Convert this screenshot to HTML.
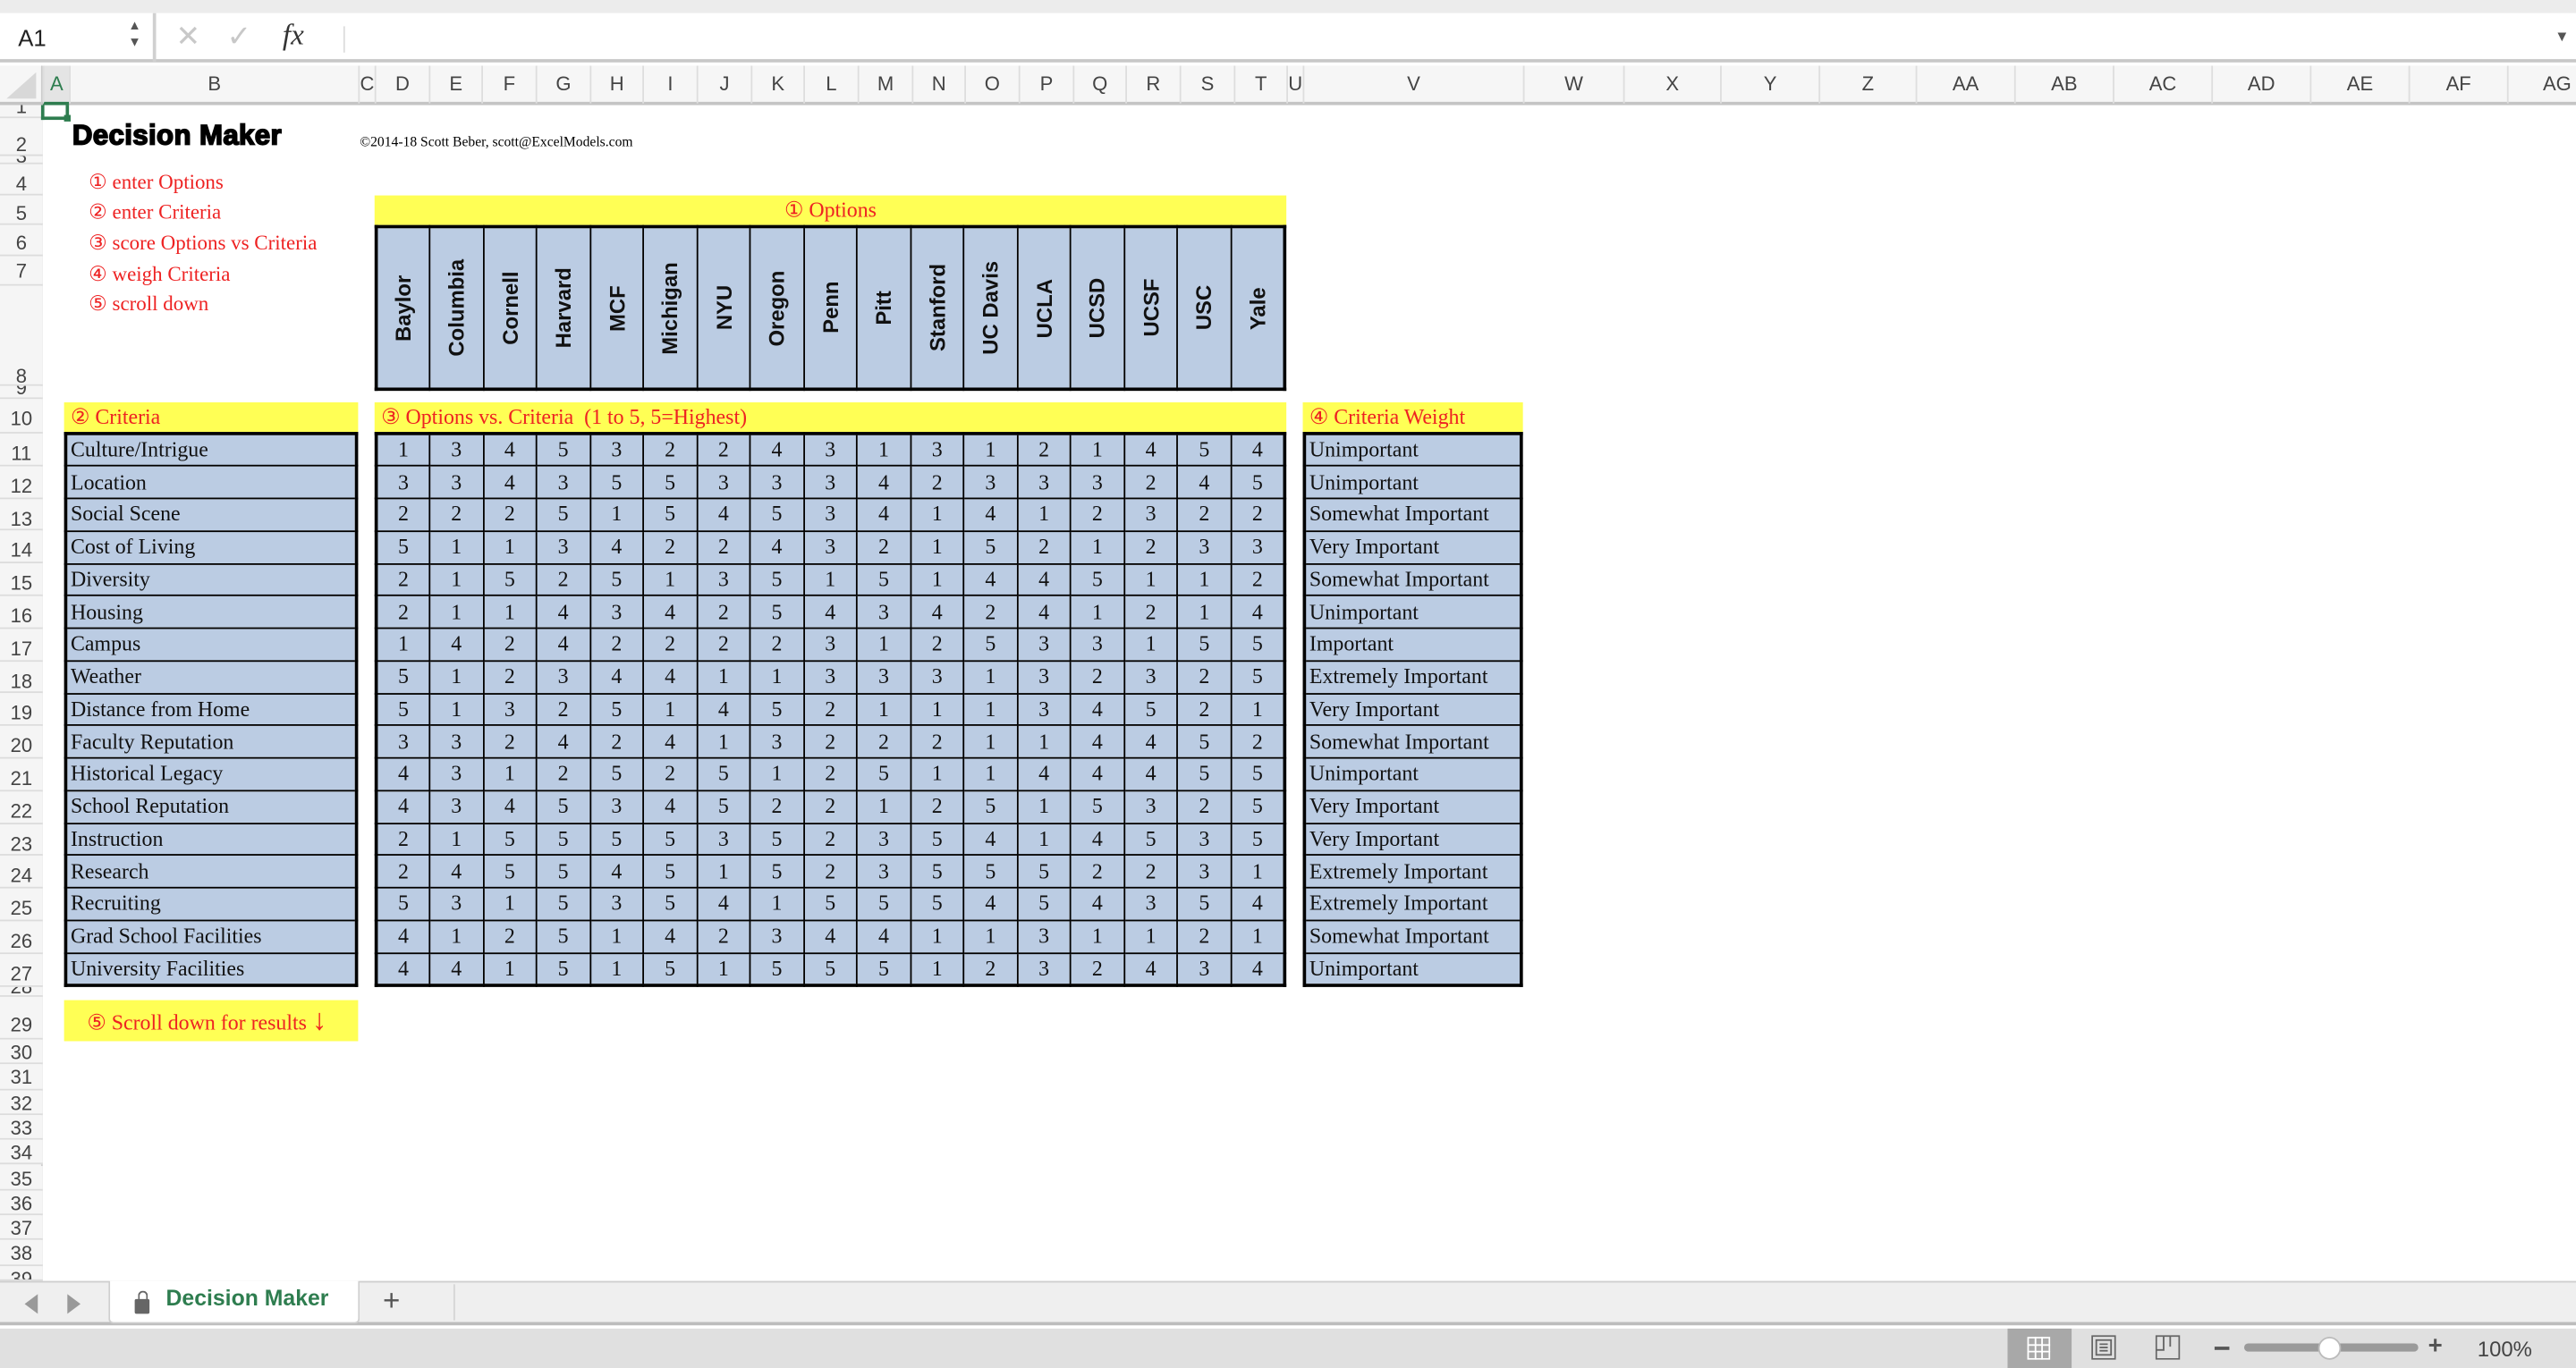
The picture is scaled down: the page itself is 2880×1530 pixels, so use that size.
<!DOCTYPE html>
<html><head><meta charset="utf-8"><style>
*{margin:0;padding:0;box-sizing:border-box}
html,body{width:2880px;height:1530px;overflow:hidden;background:#fff}
#w{position:absolute;left:0;top:0;width:1568px;height:833px;transform:scale(1.83673,1.83673);transform-origin:0 0;font-family:"Liberation Sans",sans-serif;background:#fff;overflow:hidden}
.a{position:absolute}
.ser{font-family:"Liberation Serif","DejaVu Serif",serif}
.red{color:#ee2222}
.yel{background:#ffff55}
table{border-collapse:collapse;table-layout:fixed}
td{border:1px solid #000;background:#bbcce3;height:19.75px;padding:0;font-family:"Liberation Serif",serif;font-size:13px;color:#111;white-space:nowrap;overflow:hidden}
.sc td{text-align:center}
.lt td{padding-left:2px}
.ch{position:absolute;top:40px;height:23px;border-left:1px solid #dedede;font-size:12px;color:#444;text-align:center;line-height:23px}
.rh{position:absolute;left:0;width:26px;border-bottom:1px solid #dcdcdc;font-size:12px;color:#444;text-align:center;overflow:hidden;background:#f5f5f5}
.vt{writing-mode:vertical-rl;transform:rotate(180deg);font-family:"Liberation Sans",sans-serif;font-weight:bold;font-size:13px;display:flex;align-items:center;justify-content:center;height:97px;width:100%;margin:0 auto}
.op td{height:97px;text-align:center;vertical-align:middle}
</style></head><body><div id="w">
<!-- top bars -->
<div class="a" style="left:0;top:0;width:1568px;height:8px;background:#ececec"></div>
<div class="a" style="left:0;top:8px;width:1568px;height:30px;background:#fff;border-bottom:2px solid #c8c8c8"></div>
<div class="a" style="left:0;top:8px;width:95px;height:30px;border-right:2px solid #d0d0d0"></div>
<div class="a" style="left:11px;top:15px;font-size:14px;color:#222">A1</div>
<div class="a" style="left:78px;top:11px;font-size:8px;color:#555;line-height:10px">▲<br>▼</div>
<div class="a" style="left:107px;top:12px;font-size:18px;color:#c8c8c8">✕</div>
<div class="a" style="left:138px;top:12px;font-size:18px;color:#c8c8c8">✓</div>
<div class="a ser" style="left:172px;top:11px;font-size:18px;font-style:italic;color:#333">fx</div>
<div class="a" style="left:209px;top:16px;width:1px;height:16px;background:#ddd"></div>
<div class="a" style="left:1555px;top:17px;font-size:9px;color:#555">▼</div>
<!-- column header -->
<div class="a" style="left:0;top:40px;width:1568px;height:24px;background:#f6f6f6;border-bottom:2px solid #c4c4c4"></div>
<div class="a" style="left:0;top:40px;width:26px;height:23px;border-right:1px solid #ccc"></div>
<div class="a" style="left:4px;top:44px;width:0;height:0;border-left:18px solid transparent;border-bottom:16px solid #d8d8d8"></div>
<div class="ch" style="left:26px;width:16px;color:#2e7d4f;background:#e4e4e4;border-bottom:2px solid #2e7d4f;height:24px">A</div>
<div class="ch" style="left:42px;width:176px">B</div>
<div class="ch" style="left:218px;width:10px">C</div>
<div class="ch" style="left:228px;width:33px">D</div>
<div class="ch" style="left:261px;width:32px">E</div>
<div class="ch" style="left:293px;width:33px">F</div>
<div class="ch" style="left:326px;width:33px">G</div>
<div class="ch" style="left:359px;width:32px">H</div>
<div class="ch" style="left:391px;width:33px">I</div>
<div class="ch" style="left:424px;width:33px">J</div>
<div class="ch" style="left:457px;width:32px">K</div>
<div class="ch" style="left:489px;width:33px">L</div>
<div class="ch" style="left:522px;width:33px">M</div>
<div class="ch" style="left:555px;width:32px">N</div>
<div class="ch" style="left:587px;width:33px">O</div>
<div class="ch" style="left:620px;width:33px">P</div>
<div class="ch" style="left:653px;width:32px">Q</div>
<div class="ch" style="left:685px;width:33px">R</div>
<div class="ch" style="left:718px;width:33px">S</div>
<div class="ch" style="left:751px;width:32px">T</div>
<div class="ch" style="left:783px;width:10px">U</div>
<div class="ch" style="left:793px;width:134px">V</div>
<div class="ch" style="left:927px;width:61px">W</div>
<div class="ch" style="left:988px;width:59px">X</div>
<div class="ch" style="left:1047px;width:60px">Y</div>
<div class="ch" style="left:1107px;width:59px">Z</div>
<div class="ch" style="left:1166px;width:60px">AA</div>
<div class="ch" style="left:1226px;width:60px">AB</div>
<div class="ch" style="left:1286px;width:60px">AC</div>
<div class="ch" style="left:1346px;width:60px">AD</div>
<div class="ch" style="left:1406px;width:60px">AE</div>
<div class="ch" style="left:1466px;width:60px">AF</div>
<div class="ch" style="left:1526px;width:60px">AG</div>
<!-- row headers -->
<div class="a" style="left:0;top:64px;width:26px;height:716px;background:#f5f5f5;border-right:1px solid #ccc"></div>
<div class="rh" style="top:64px;height:8px;line-height:2px">1</div>
<div class="rh" style="top:72px;height:23px;line-height:32px">2</div>
<div class="rh" style="top:95px;height:5px;line-height:0px">3</div>
<div class="rh" style="top:100px;height:19px;line-height:24px">4</div>
<div class="rh" style="top:119px;height:18px;line-height:22px">5</div>
<div class="rh" style="top:137px;height:19px;line-height:22px">6</div>
<div class="rh" style="top:156px;height:18px;line-height:18px">7</div>
<div class="rh" style="top:174px;height:61px;line-height:110px">8</div>
<div class="rh" style="top:235px;height:8px;line-height:2px">9</div>
<div class="rh" style="top:243px;height:21px;line-height:24px">10</div>
<div class="rh" style="top:264px;height:19.8px;line-height:24px">11</div>
<div class="rh" style="top:283.8px;height:19.8px;line-height:24px">12</div>
<div class="rh" style="top:303.6px;height:19.8px;line-height:24px">13</div>
<div class="rh" style="top:323.4px;height:19.8px;line-height:24px">14</div>
<div class="rh" style="top:343.2px;height:19.8px;line-height:24px">15</div>
<div class="rh" style="top:363px;height:19.8px;line-height:24px">16</div>
<div class="rh" style="top:382.8px;height:19.8px;line-height:24px">17</div>
<div class="rh" style="top:402.6px;height:19.8px;line-height:24px">18</div>
<div class="rh" style="top:422.4px;height:19.8px;line-height:24px">19</div>
<div class="rh" style="top:442.2px;height:19.8px;line-height:24px">20</div>
<div class="rh" style="top:462px;height:19.8px;line-height:24px">21</div>
<div class="rh" style="top:481.8px;height:19.8px;line-height:24px">22</div>
<div class="rh" style="top:501.6px;height:19.8px;line-height:24px">23</div>
<div class="rh" style="top:521.4px;height:19.8px;line-height:24px">24</div>
<div class="rh" style="top:541.2px;height:19.8px;line-height:24px">25</div>
<div class="rh" style="top:561px;height:19.8px;line-height:24px">26</div>
<div class="rh" style="top:580.8px;height:19.8px;line-height:24px">27</div>
<div class="rh" style="top:600.6px;height:6.4px;line-height:0px">28</div>
<div class="rh" style="top:607px;height:26px;line-height:34px">29</div>
<div class="rh" style="top:633px;height:15.3px;line-height:17px">30</div>
<div class="rh" style="top:648.3px;height:15.3px;line-height:17px">31</div>
<div class="rh" style="top:663.6px;height:15.3px;line-height:17px">32</div>
<div class="rh" style="top:678.9px;height:15.3px;line-height:17px">33</div>
<div class="rh" style="top:694.2px;height:15.3px;line-height:17px">34</div>
<div class="rh" style="top:709.5px;height:15.3px;line-height:17px">35</div>
<div class="rh" style="top:724.8px;height:15.3px;line-height:17px">36</div>
<div class="rh" style="top:740.1px;height:15.3px;line-height:17px">37</div>
<div class="rh" style="top:755.4px;height:15.3px;line-height:17px">38</div>
<div class="rh" style="top:770.7px;height:9.3px;line-height:17px">39</div>
<!-- selected cell A1 -->
<div class="a" style="left:25px;top:64px;width:17px;height:9px;border:2px solid #2e7d4f;border-top:none"></div>
<div class="a" style="left:39px;top:70px;width:4px;height:4px;background:#2e7d4f"></div>
<!-- title -->
<div class="a" style="left:44px;top:73px;font-size:17px;font-weight:900;letter-spacing:0.2px;-webkit-text-stroke:0.9px #000">Decision Maker</div>
<div class="a ser" style="left:219px;top:81px;font-size:8.5px">©2014-18 Scott Beber, scott@ExcelModels.com</div>
<div class="a ser red" style="left:54px;top:102px;font-size:12.5px;line-height:18px">① enter Options<br>② enter Criteria<br><span style="line-height:20px">③ score Options vs Criteria</span><br>④ weigh Criteria<br>⑤ scroll down</div>
<!-- options header -->
<div class="a yel ser red" style="left:228px;top:119px;width:555px;height:18px;text-align:center;font-size:13px;line-height:18px">① Options</div>
<table class="a op" style="left:228px;top:137px;width:555px;border:2.5px solid #000">
<tr><td><div class="vt">Baylor</div></td><td><div class="vt">Columbia</div></td><td><div class="vt">Cornell</div></td><td><div class="vt">Harvard</div></td><td><div class="vt">MCF</div></td><td><div class="vt">Michigan</div></td><td><div class="vt">NYU</div></td><td><div class="vt">Oregon</div></td><td><div class="vt">Penn</div></td><td><div class="vt">Pitt</div></td><td><div class="vt">Stanford</div></td><td><div class="vt">UC Davis</div></td><td><div class="vt">UCLA</div></td><td><div class="vt">UCSD</div></td><td><div class="vt">UCSF</div></td><td><div class="vt">USC</div></td><td><div class="vt">Yale</div></td></tr>
</table>
<!-- section headers -->
<div class="a yel ser red" style="left:39px;top:245px;width:179px;height:18px;font-size:13px;line-height:18px;padding-left:4px">② Criteria</div>
<div class="a yel ser red" style="left:228px;top:245px;width:555px;height:18px;font-size:13px;line-height:18px;padding-left:4px">③ Options vs. Criteria&nbsp; (1 to 5, 5=Highest)</div>
<div class="a yel ser red" style="left:793px;top:245px;width:134px;height:18px;font-size:13px;line-height:18px;padding-left:4px">④ Criteria Weight</div>
<!-- criteria -->
<table class="a lt" style="left:39px;top:263px;width:179px;border:2.5px solid #000">
<tr><td>Culture/Intrigue</td></tr><tr><td>Location</td></tr><tr><td>Social Scene</td></tr><tr><td>Cost of Living</td></tr><tr><td>Diversity</td></tr><tr><td>Housing</td></tr><tr><td>Campus</td></tr><tr><td>Weather</td></tr><tr><td>Distance from Home</td></tr><tr><td>Faculty Reputation</td></tr><tr><td>Historical Legacy</td></tr><tr><td>School Reputation</td></tr><tr><td>Instruction</td></tr><tr><td>Research</td></tr><tr><td>Recruiting</td></tr><tr><td>Grad School Facilities</td></tr><tr><td>University Facilities</td></tr>
</table>
<!-- scores -->
<table class="a sc" style="left:228px;top:263px;width:555px;border:2.5px solid #000">
<tr><td>1</td><td>3</td><td>4</td><td>5</td><td>3</td><td>2</td><td>2</td><td>4</td><td>3</td><td>1</td><td>3</td><td>1</td><td>2</td><td>1</td><td>4</td><td>5</td><td>4</td></tr>
<tr><td>3</td><td>3</td><td>4</td><td>3</td><td>5</td><td>5</td><td>3</td><td>3</td><td>3</td><td>4</td><td>2</td><td>3</td><td>3</td><td>3</td><td>2</td><td>4</td><td>5</td></tr>
<tr><td>2</td><td>2</td><td>2</td><td>5</td><td>1</td><td>5</td><td>4</td><td>5</td><td>3</td><td>4</td><td>1</td><td>4</td><td>1</td><td>2</td><td>3</td><td>2</td><td>2</td></tr>
<tr><td>5</td><td>1</td><td>1</td><td>3</td><td>4</td><td>2</td><td>2</td><td>4</td><td>3</td><td>2</td><td>1</td><td>5</td><td>2</td><td>1</td><td>2</td><td>3</td><td>3</td></tr>
<tr><td>2</td><td>1</td><td>5</td><td>2</td><td>5</td><td>1</td><td>3</td><td>5</td><td>1</td><td>5</td><td>1</td><td>4</td><td>4</td><td>5</td><td>1</td><td>1</td><td>2</td></tr>
<tr><td>2</td><td>1</td><td>1</td><td>4</td><td>3</td><td>4</td><td>2</td><td>5</td><td>4</td><td>3</td><td>4</td><td>2</td><td>4</td><td>1</td><td>2</td><td>1</td><td>4</td></tr>
<tr><td>1</td><td>4</td><td>2</td><td>4</td><td>2</td><td>2</td><td>2</td><td>2</td><td>3</td><td>1</td><td>2</td><td>5</td><td>3</td><td>3</td><td>1</td><td>5</td><td>5</td></tr>
<tr><td>5</td><td>1</td><td>2</td><td>3</td><td>4</td><td>4</td><td>1</td><td>1</td><td>3</td><td>3</td><td>3</td><td>1</td><td>3</td><td>2</td><td>3</td><td>2</td><td>5</td></tr>
<tr><td>5</td><td>1</td><td>3</td><td>2</td><td>5</td><td>1</td><td>4</td><td>5</td><td>2</td><td>1</td><td>1</td><td>1</td><td>3</td><td>4</td><td>5</td><td>2</td><td>1</td></tr>
<tr><td>3</td><td>3</td><td>2</td><td>4</td><td>2</td><td>4</td><td>1</td><td>3</td><td>2</td><td>2</td><td>2</td><td>1</td><td>1</td><td>4</td><td>4</td><td>5</td><td>2</td></tr>
<tr><td>4</td><td>3</td><td>1</td><td>2</td><td>5</td><td>2</td><td>5</td><td>1</td><td>2</td><td>5</td><td>1</td><td>1</td><td>4</td><td>4</td><td>4</td><td>5</td><td>5</td></tr>
<tr><td>4</td><td>3</td><td>4</td><td>5</td><td>3</td><td>4</td><td>5</td><td>2</td><td>2</td><td>1</td><td>2</td><td>5</td><td>1</td><td>5</td><td>3</td><td>2</td><td>5</td></tr>
<tr><td>2</td><td>1</td><td>5</td><td>5</td><td>5</td><td>5</td><td>3</td><td>5</td><td>2</td><td>3</td><td>5</td><td>4</td><td>1</td><td>4</td><td>5</td><td>3</td><td>5</td></tr>
<tr><td>2</td><td>4</td><td>5</td><td>5</td><td>4</td><td>5</td><td>1</td><td>5</td><td>2</td><td>3</td><td>5</td><td>5</td><td>5</td><td>2</td><td>2</td><td>3</td><td>1</td></tr>
<tr><td>5</td><td>3</td><td>1</td><td>5</td><td>3</td><td>5</td><td>4</td><td>1</td><td>5</td><td>5</td><td>5</td><td>4</td><td>5</td><td>4</td><td>3</td><td>5</td><td>4</td></tr>
<tr><td>4</td><td>1</td><td>2</td><td>5</td><td>1</td><td>4</td><td>2</td><td>3</td><td>4</td><td>4</td><td>1</td><td>1</td><td>3</td><td>1</td><td>1</td><td>2</td><td>1</td></tr>
<tr><td>4</td><td>4</td><td>1</td><td>5</td><td>1</td><td>5</td><td>1</td><td>5</td><td>5</td><td>5</td><td>1</td><td>2</td><td>3</td><td>2</td><td>4</td><td>3</td><td>4</td></tr>
</table>
<!-- weights -->
<table class="a lt" style="left:793px;top:263px;width:134px;border:2.5px solid #000">
<tr><td>Unimportant</td></tr><tr><td>Unimportant</td></tr><tr><td>Somewhat Important</td></tr><tr><td>Very Important</td></tr><tr><td>Somewhat Important</td></tr><tr><td>Unimportant</td></tr><tr><td>Important</td></tr><tr><td>Extremely Important</td></tr><tr><td>Very Important</td></tr><tr><td>Somewhat Important</td></tr><tr><td>Unimportant</td></tr><tr><td>Very Important</td></tr><tr><td>Very Important</td></tr><tr><td>Extremely Important</td></tr><tr><td>Extremely Important</td></tr><tr><td>Somewhat Important</td></tr><tr><td>Unimportant</td></tr>
</table>
<!-- scroll down -->
<div class="a yel ser red" style="left:39px;top:609px;width:179px;height:25px;font-size:13px;line-height:27px;padding-left:14px">⑤ Scroll down for results <span style="font-size:18px;line-height:20px">↓</span></div>
<!-- tab bar -->
<div class="a" style="left:0;top:780px;width:1568px;height:27px;background:#efefef;border-top:1px solid #cfcfcf;border-bottom:2px solid #bcbcbc"></div>
<div class="a" style="left:15px;top:788px;width:0;height:0;border-top:6px solid transparent;border-bottom:6px solid transparent;border-right:8px solid #999"></div>
<div class="a" style="left:41px;top:788px;width:0;height:0;border-top:6px solid transparent;border-bottom:6px solid transparent;border-left:8px solid #999"></div>
<div class="a" style="left:66px;top:780px;width:153px;height:26px;background:#fff;border:1px solid #cfcfcf;border-top:none;border-radius:0 0 3px 3px"></div>
<div class="a" style="left:82px;top:791px;width:9px;height:9px;background:#666;border-radius:1px"></div>
<div class="a" style="left:83.5px;top:786px;width:6px;height:7px;border:1.5px solid #666;border-bottom:none;border-radius:3px 3px 0 0"></div>
<div class="a" style="left:101px;top:783px;font-size:13.5px;font-weight:bold;color:#2e7d4f">Decision Maker</div>
<div class="a" style="left:233px;top:782px;font-size:18px;color:#555">+</div>
<div class="a" style="left:276px;top:782px;width:1px;height:22px;background:#d5d5d5"></div>
<!-- status bar -->
<div class="a" style="left:0;top:809px;width:1568px;height:24px;background:#e0e0e0"></div>
<div class="a" style="left:1222px;top:809px;width:39px;height:24px;background:#a8a8a8"></div>
<svg class="a" style="left:1234px;top:814px" width="14" height="14" viewBox="0 0 14 14"><rect x="0.5" y="0.5" width="13" height="13" fill="none" stroke="#fff"/><path d="M5 0v14M9 0v14M0 5h14M0 9h14" stroke="#fff"/></svg>
<svg class="a" style="left:1273px;top:813px" width="15" height="15" viewBox="0 0 15 15"><rect x="0.5" y="0.5" width="14" height="14" fill="none" stroke="#666"/><rect x="3" y="3" width="9" height="9" fill="none" stroke="#666"/><path d="M5 5.5h5M5 7.5h5M5 9.5h5" stroke="#666"/></svg>
<svg class="a" style="left:1312px;top:813px" width="15" height="15" viewBox="0 0 15 15"><path d="M0.5 0.5h14v14h-14zM0.5 9h4.5V0.5M9 0.5V7" fill="none" stroke="#666"/></svg>
<div class="a" style="left:1348px;top:820px;width:9px;height:2px;background:#555"></div>
<div class="a" style="left:1366px;top:818px;width:106px;height:5px;border-radius:3px;background:#9a9a9a"></div>
<div class="a" style="left:1411px;top:814px;width:14px;height:14px;border-radius:50%;background:#fff;border:1px solid #bbb"></div>
<div class="a" style="left:1478px;top:811px;font-size:15px;color:#555;font-weight:bold">+</div>
<div class="a" style="left:1508px;top:814px;font-size:13px;color:#444">100%</div>
</div></body></html>
